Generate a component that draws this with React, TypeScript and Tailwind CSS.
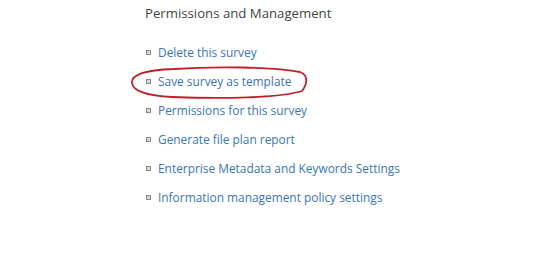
import React from "react";

const items = [
  "Delete this survey",
  "Save survey as template",
  "Permissions for this survey",
  "Generate file plan report",
  "Enterprise Metadata and Keywords Settings",
  "Information management policy settings",
];

export default function App() {
  return (
    <div className="w-[537px] h-[257px] bg-white overflow-hidden" style={{ fontFamily: '"Open Sans", "Liberation Sans", sans-serif' }}>
      <div className="pl-[145px] pt-[4px]">
        <div className="text-[13.2px] leading-[18px] text-[#444444]">Permissions and Management</div>
        <ul className="mt-[21px] flex flex-col gap-[11px]">
          {items.map((t, i) => (
            <li key={t} className="relative flex items-center h-[18px] gap-[7px] pl-[1px]">
              <span className="w-[5px] h-[5px] border border-[#8a8a8a] bg-[#d8d8d8] shrink-0" />
              <span className="text-[11.9px] text-[#3a76b6] leading-[18px]">{t}</span>
              {i === 1 && (
                <svg className="absolute left-[-15px] top-[-6px] w-[180px] h-[34px] pointer-events-none" viewBox="0 0 180 34" fill="none">
                  <path
                    d="M44 3 C86 0 146 1 170 6 C178 9 178 17 172 25 C150 32 92 33 42 31 C18 30 3 25 2 17 C1 9 14 4 44 3 Z"
                    stroke="#c0202a"
                    strokeWidth="1.8"
                  />
                </svg>
              )}
            </li>
          ))}
        </ul>
      </div>
    </div>
  );
}
